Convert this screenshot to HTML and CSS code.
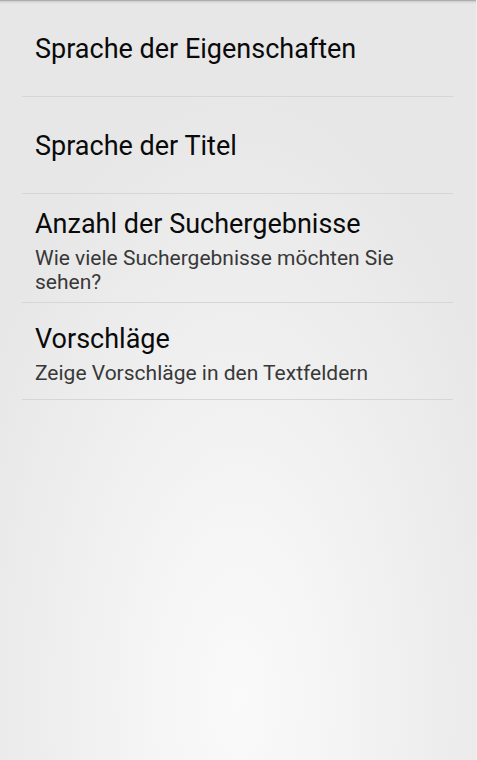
FILE: index.html
```html
<!DOCTYPE html>
<html lang="de">
<head>
<meta charset="utf-8">
<title>Einstellungen</title>
<link rel="stylesheet" href="styles.css">
</head>
<body>
<div class="screen">
  <ul class="prefs">
    <li class="pref single">
      <div class="pref-title">Sprache der Eigenschaften</div>
    </li>
    <li class="pref single">
      <div class="pref-title">Sprache der Titel</div>
    </li>
    <li class="pref double">
      <div class="pref-title">Anzahl der Suchergebnisse</div>
      <div class="pref-summary">Wie viele Suchergebnisse möchten Sie sehen?</div>
    </li>
    <li class="pref double">
      <div class="pref-title">Vorschläge</div>
      <div class="pref-summary">Zeige Vorschläge in den Textfeldern</div>
    </li>
  </ul>
</div>
</body>
</html>
```
FILE: styles.css
```css
html, body {
  margin: 0;
  padding: 0;
  height: 100%;
}
body {
  font-family: Roboto, "Noto Sans", sans-serif;
  background: #e8e8e8;
}
.screen {
  position: relative;
  width: 477px;
  height: 760px;
  overflow: hidden;
  background: radial-gradient(ellipse 62% 80% at 50% 92%, #fafafa 0%, #f5f5f5 30%, #eeeeee 65%, #e7e7e7 100%);
  box-sizing: border-box;
  border-right: 1px solid #efefef;
}
.screen::before {
  content: "";
  position: absolute;
  left: 0;
  right: 0;
  top: 0;
  height: 4px;
  background: linear-gradient(#9c9c9c, rgba(200,200,200,0.6) 40%, rgba(230,230,230,0));
}
.prefs {
  list-style: none;
  margin: 0;
  padding: 0 23px 0 22px;
}
.pref {
  display: flex;
  flex-direction: column;
  justify-content: center;
  box-sizing: border-box;
  border-bottom: 1px solid #d6d6d6;
  padding-left: 13px;
  padding-right: 20px;
}
.pref.single {
  height: 97px;
  padding-top: 2px;
}
.pref.double {
  min-height: 97px;
  padding-top: 14px;
  padding-bottom: 8px;
}
.pref-title {
  font-size: 27px;
  line-height: 32px;
  color: #0a0a0a;
}
.pref-summary {
  font-size: 21px;
  line-height: 24px;
  color: #383838;
  margin-top: 6px;
}
```
